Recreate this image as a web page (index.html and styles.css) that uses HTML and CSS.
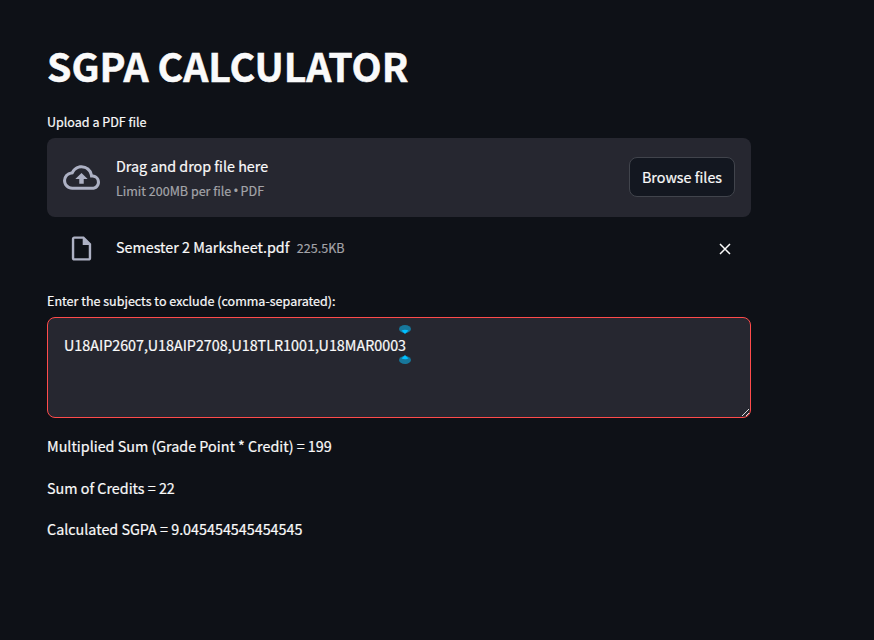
FILE: index.html
```html
<!DOCTYPE html>
<html lang="en">
<head>
<meta charset="utf-8">
<title>SGPA Calculator</title>
<link rel="stylesheet" href="styles.css">
</head>
<body>
<main class="app">
  <h1 class="title">SGPA CALCULATOR</h1>
  <div class="label upload-label">Upload a PDF file</div>
  <section class="dropzone">
    <svg class="cloud" viewBox="0 0 24 24"><path d="M19.35 10.04A7.49 7.49 0 0 0 12 4C9.11 4 6.6 5.64 5.35 8.04A5.994 5.994 0 0 0 0 14c0 3.31 2.69 6 6 6h13c2.76 0 5-2.24 5-5 0-2.64-2.05-4.78-4.65-4.96zM19 18H6c-2.21 0-4-1.79-4-4 0-2.05 1.53-3.76 3.56-3.97l1.07-.11.5-.95A5.469 5.469 0 0 1 12 6c2.62 0 4.88 1.86 5.39 4.43l.3 1.5 1.53.11A2.98 2.98 0 0 1 22 15c0 1.65-1.35 3-3 3zM8 13h2.55v3h2.9v-3H16l-4-4-4 4z"/></svg>
    <div class="instructions">
      <span class="text">Drag and drop file here</span>
      <span class="small">Limit 200MB per file <span class="dot">•</span> PDF</span>
    </div>
    <button class="browse" type="button">Browse files</button>
  </section>
  <div class="file">
    <svg class="doc" viewBox="0 0 24 24"><path d="M6 2c-1.100 0-1.990.9-1.990 2L4 20c0 1.100.89 2 1.990 2H18c1.100 0 2-.9 2-2V8l-6-6H6zm0 18V4h7v5h5v11H6z"/></svg>
    <span class="text filename">Semester 2 Marksheet.pdf</span>
    <span class="small size">225.5KB</span>
    <svg class="close" viewBox="0 0 12 12"><path d="M1 1l10 10M11 1L1 11"/></svg>
  </div>
  <label class="label exclude-label" for="exclude">Enter the subjects to exclude (comma-separated):</label>
  <div class="field">
    <textarea id="exclude" spellcheck="false">U18AIP2607,U18AIP2708,U18TLR1001,U18MAR0003</textarea>
    <svg class="grip" viewBox="0 0 9 9"><path d="M1 8L8 1M5 8L8 5"/></svg>
    <svg class="caret" viewBox="0 0 12 40"><ellipse cx="6" cy="4" rx="6" ry="4"/><path d="M2.500 5.500Q6 4 9.500 5.500L6 9z"/><ellipse cx="6" cy="35" rx="6" ry="4"/><path d="M2.500 33.500Q6 35 9.500 33.500L6 30z"/></svg>
  </div>
  <p class="text result">Multiplied Sum (Grade Point * Credit) = 199</p>
  <p class="text result">Sum of Credits = 22</p>
  <p class="text result">Calculated SGPA = 9.045454545454545</p>
</main>
</body>
</html>
```
FILE: styles.css
```css
* { box-sizing: border-box; }
body {
  margin: 0;
  height: 640px;
  overflow: hidden;
  background: #0e1117;
  color: #fafafa;
  font-family: "Noto Sans CJK SC", "Noto Sans", sans-serif;
  -webkit-text-stroke: 0.2px;
}
.app { width: 704px; margin-left: 47px; padding-top: 39px; }
.title {
  margin: 0;
  font-size: 39.2px;
  line-height: 52px;
  font-weight: 700;
  white-space: nowrap;
  -webkit-text-stroke: 0.5px;
}
.label { display: block; font-size: 12.54px; line-height: 22px; }
.text { font-size: 14.33px; line-height: 26px; }
.small { font-size: 12.54px; line-height: 20px; color: #a3a4a9; }
.dot { font-family: "Open Sans", sans-serif; font-size: 14px; line-height: 1; margin: 0 -0.8px; }
.upload-label { margin-top: 20px; }
.dropzone {
  display: flex;
  align-items: center;
  height: 79px;
  margin-top: 5px;
  padding: 0 16px;
  border-radius: 8px;
  background: #262730;
}
.cloud { width: 37px; height: 37px; margin-right: 16px; fill: #adb1c4; }
.instructions { display: flex; flex-direction: column; gap: 2px; padding-bottom: 1px; }
.browse {
  width: 106px;
  height: 40px;
  margin: 0 0 1px auto;
  padding: 0;
  border: 1px solid #41444c;
  border-radius: 8px;
  background: #131720;
  color: #fafafa;
  font: 14.33px/26px "Noto Sans CJK SC", "Noto Sans", sans-serif;
  -webkit-text-stroke: 0.2px;
}
.file { display: flex; align-items: center; height: 32px; margin-top: 15px; padding: 0 20px; }
.doc { width: 29px; height: 29px; margin-right: 20px; fill: #adb1c4; }
.filename { margin-bottom: 2px; }
.size { margin-left: 7.5px; }
.close { width: 12px; height: 12px; margin: 2px 0 0 auto; fill: none; stroke: #fafafa; stroke-width: 1.5; }
.exclude-label { margin-top: 26px; }
.field { position: relative; height: 101px; margin-top: 5px; }
textarea {
  display: block;
  width: 100%;
  height: 100%;
  padding: 14px 16px;
  border: 1px solid #ff4b4b;
  border-radius: 8px;
  outline: 0;
  resize: none;
  background: #262730;
  color: #fafafa;
  font: 14.33px/26px "Noto Sans CJK SC", "Noto Sans", sans-serif;
  -webkit-text-stroke: 0.2px;
}
.grip { position: absolute; right: 1px; bottom: 1px; width: 9px; height: 9px; fill: none; stroke: #ddd; stroke-width: 1; }
.caret { position: absolute; left: 352px; top: 8px; width: 12px; height: 40px; }
.caret ellipse { fill: #17779b; }
.caret path { fill: #00bfff; }
.result { margin: 0 0 15.5px; }
.field + .result { margin-top: 15px; }
```
